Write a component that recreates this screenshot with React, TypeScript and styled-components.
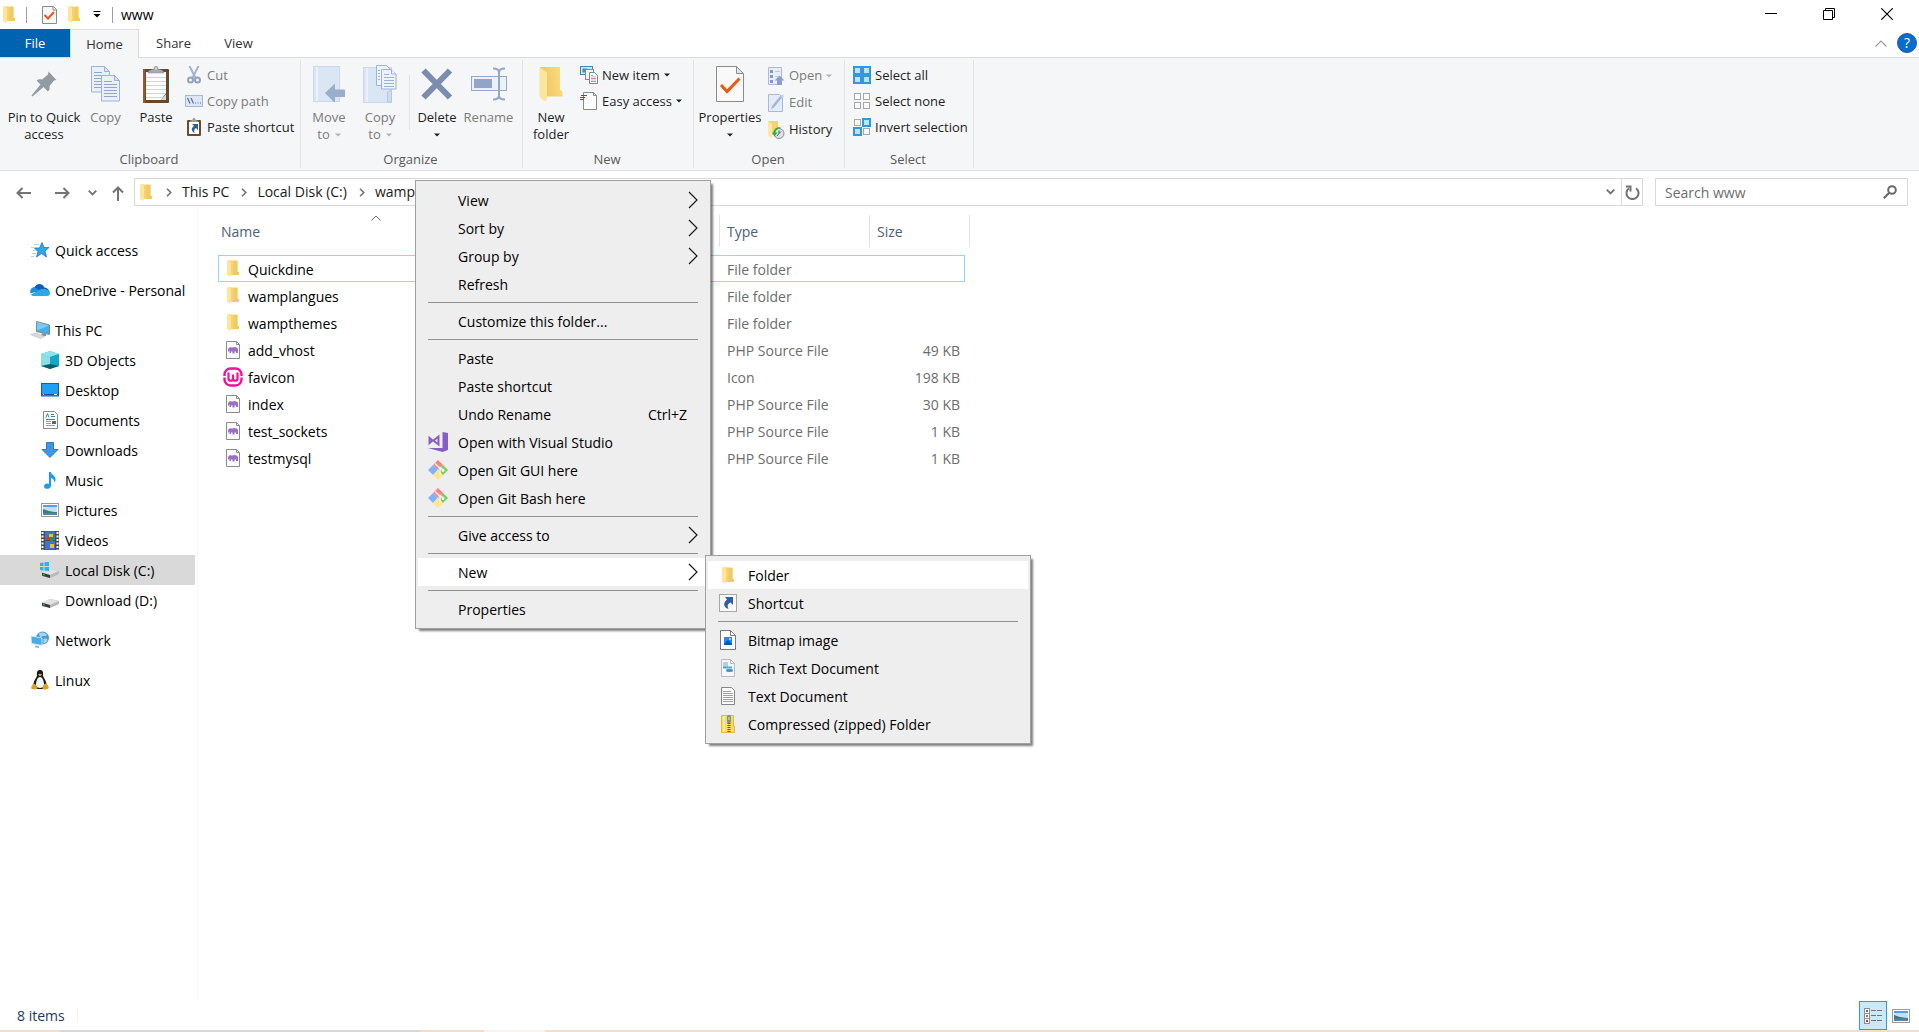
import React from "react";
import styled, { createGlobalStyle, css } from "styled-components";

const GlobalStyle = createGlobalStyle`
  * { box-sizing: border-box; }
  html, body { margin: 0; padding: 0; }
  body {
    font-family: "Open Sans", "Noto Sans", sans-serif;
    font-size: 14px;
    line-height: 20px;
    color: #000;
    background: #fff;
  }
  button, input {
    font: inherit;
    color: inherit;
    margin: 0;
    padding: 0;
    border: 0;
    background: none;
  }
  button { cursor: default; }
  ul { list-style: none; margin: 0; padding: 0; }
  svg { display: block; flex: none; }
`;

/* ---------- icons ---------- */

const FolderIcon = ({ w = 12, h = 17 }: { w?: number; h?: number }) => (
  <svg width={w} height={h} viewBox="0 0 12 17" preserveAspectRatio="none">
    <path d="M3 0.5h7.5v11.5l1.5 0v3H3z" fill="#f7d274" />
    <path d="M7 1h3.5v11H12v3H6z" fill="#ecc35c" opacity="0.6" />
    <path d="M0 0.3L4 2v12.5L3.6 17L0 15z" fill="#ffe59a" />
    <path d="M0 0.3h3L4 2z" fill="#fdd878" />
  </svg>
);

const BigFolderIcon = () => (
  <svg width="24" height="35" viewBox="0 0 24 35">
    <defs>
      <linearGradient id="bigFolder" x1="0" x2="1" y1="0.6" y2="0.4">
        <stop offset="0" stopColor="#eec35e" />
        <stop offset="1" stopColor="#f9dc80" />
      </linearGradient>
    </defs>
    <path d="M1 0h20v22.5l2.5 2V29.5H6z" fill="url(#bigFolder)" />
    <path d="M0.5 0.3l7.5 5v26.5l-1.5 3l-6-4.5z" fill="#ffe59b" />
  </svg>
);

const CheckPageIcon = () => (
  <svg width="15" height="18" viewBox="0 0 15 18">
    <path d="M0.5 0.5h11l3 3v14h-14z" fill="#f7f7f7" stroke="#8b8b8b" />
    <path d="M11 0.5v3.5h3.5" fill="none" stroke="#8b8b8b" />
    <path d="M2.5 9l3.5 3.5l6-6.5" fill="none" stroke="#e8591c" strokeWidth="2" />
  </svg>
);

const PropertiesIcon = () => (
  <svg width="28" height="36" viewBox="0 0 28 36">
    <path d="M0.5 0.5h20l7 7v28h-27z" fill="#f9f9f9" stroke="#8b8b8b" />
    <path d="M20.5 0.5v7h7z" fill="#e3e3e3" stroke="#8b8b8b" />
    <path d="M5 19l6 6.5l12.5-13" fill="none" stroke="#f0560f" strokeWidth="3" />
  </svg>
);

const PinIcon = () => (
  <svg width="26" height="26" viewBox="0 0 26 26">
    <path
      d="M17.5 0.5l8 8.5l-2.5 0.5l-4.5 5.5c0.5 2.5 0 4-1.5 5.5l-4.5-4.5l-11 9.5l-1-1l9-11l-4-4c2-1.5 3.5-1.5 5.5-1l6-5z"
      fill="#929ba3"
    />
  </svg>
);

const PageLines = ({ x, y }: { x: number; y: number }) => (
  <g transform={`translate(${x} ${y})`}>
    <path d="M0.5 0.5h13l5 5v20.5h-18z" fill="#e9f0fa" stroke="#9fb2d3" />
    <path d="M13.5 0.5v5h5z" fill="#d6e1f2" stroke="#9fb2d3" />
    <path d="M3 6.5h8M3 9.5h13M3 12.5h13M3 15.5h13M3 18.5h13M3 21.5h13" stroke="#8fa5cb" />
  </g>
);

const CopyIcon = () => (
  <svg width="30" height="36" viewBox="0 0 30 36">
    <PageLines x={0} y={0} />
    <PageLines x={10} y={9} />
  </svg>
);

const PasteIcon = () => (
  <svg width="26" height="37" viewBox="0 0 26 37">
    <rect x="0" y="3" width="26" height="34" rx="1" fill="#6b4728" />
    <path d="M0 3h2v34H0z" fill="#8a6038" />
    <path d="M3 6h20v21l-5 7H3z" fill="#fbfdff" />
    <path d="M18 34l5-6v6z" fill="#cfdbe6" />
    <path d="M3 11.5h20M3 15.5h20M3 19.5h20M3 23.5h20M3 27.5h19M3 31.5h16" stroke="#b9dcf2" />
    <path d="M5 7c0-3 4-3 6-4c0-4 4-4 4 0c2 1 6 1 6 4z" fill="#a6a9ad" stroke="#85888c" strokeWidth="0.5" />
    <circle cx="13" cy="2.5" r="1" fill="#e7e7e7" />
  </svg>
);

const CutIcon = () => (
  <svg width="18" height="18" viewBox="0 0 18 18">
    <path d="M4.5 0L10.5 12M13.5 0L7.5 12" stroke="#a3b4cd" strokeWidth="2" />
    <circle cx="5.5" cy="14" r="2.5" fill="none" stroke="#8fa2c0" strokeWidth="2" />
    <circle cx="12.5" cy="14" r="2.5" fill="none" stroke="#8fa2c0" strokeWidth="2" />
  </svg>
);

const CopyPathIcon = () => (
  <svg width="18" height="12" viewBox="0 0 18 12">
    <rect x="0.5" y="0.5" width="17" height="11" fill="#dce6f5" stroke="#a9b9d6" />
    <path d="M2.5 3l2.5 5.5M6 3l2.5 5.5" stroke="#5e6f93" strokeWidth="1.2" />
    <path d="M10 8h1M12.5 8h1M15 8h1" stroke="#5e6f93" strokeWidth="1.2" />
  </svg>
);

const PasteShortcutIcon = () => (
  <svg width="14" height="18" viewBox="0 0 14 18">
    <rect x="0" y="2" width="14" height="16" rx="1" fill="#6d4a2c" />
    <rect x="2" y="4" width="10" height="12" fill="#fff" />
    <path d="M3 4c0-2 2-1.5 2.5-2.5c0.5-2 2.5-2 3 0c0.5 1 2.5 0.5 2.5 2.5z" fill="#9b9ea1" />
    <path d="M5 6h6v6l-2-2c-2 1-2 2.5-1.5 5c-3.5-2-3.5-5-0.5-7z" fill="#2b5c9e" />
  </svg>
);

const MoveToIcon = () => (
  <svg width="32" height="36" viewBox="0 0 32 36">
    <rect x="0.5" y="0.5" width="26" height="35" fill="#dbe6f5" stroke="#cbd9ee" />
    <path d="M4 1v34" stroke="#eaf1fa" strokeWidth="2" />
    <path d="M12 27l10-9.5v6h10v7.5h-10v6z" fill="#9aadca" />
  </svg>
);

const CopyToIcon = () => (
  <svg width="34" height="38" viewBox="0 0 34 38">
    <rect x="0.5" y="2.5" width="28" height="35" fill="#dbe6f5" stroke="#cbd9ee" />
    <path d="M4 3v34" stroke="#eaf1fa" strokeWidth="2" />
    <path d="M24.5 37v-10l4-2v12z" fill="#cfdcf0" stroke="#b5c6e1" />
    <g stroke="#9fb2d3" fill="#edf3fb">
      <path d="M13.5 0.5h10l4 4v16h-14z" />
      <path d="M18.5 4.5h10l4.5 4.5v15h-14.5z" />
      <path d="M28.5 4.5v4.5h4.5" />
      <path d="M15 5.5h2M15 8.5h2M15 11.5h2M15 14.5h2M21 9.5h5M21 12.5h10M21 15.5h10M21 18.5h10M21 21.5h10" />
    </g>
  </svg>
);

const DeleteIcon = () => (
  <svg width="32" height="32" viewBox="0 0 32 32">
    <path d="M2.5 2.5L29 29.5M29 2.5L2.5 29.5" stroke="#7b8cae" strokeWidth="6" />
  </svg>
);

const RenameIcon = () => (
  <svg width="36" height="34" viewBox="0 0 36 34">
    <rect x="0.5" y="9.5" width="35" height="14" fill="#eaf1fb" stroke="#94a8cb" />
    <rect x="3" y="12" width="18" height="9" fill="#93a5c6" />
    <path d="M22 1.5c4 0 6 1.5 6 4c0-2.5 2-4 6-4M28 4v26M22 32.5c4 0 6-1.5 6-4c0 2.5 2 4 6 4" fill="none" stroke="#94a8c9" strokeWidth="2" />
  </svg>
);

const NewItemIcon = () => (
  <svg width="18" height="18" viewBox="0 0 18 18">
    <rect x="0.5" y="0.5" width="12" height="8" fill="#c9e9f7" stroke="#3d88b3" />
    <rect x="2.5" y="2.5" width="5" height="4" fill="#41919f" />
    <rect x="5.5" y="3.5" width="8" height="10" fill="#f5f5f5" stroke="#8a8a8a" />
    <path d="M9.5 6.5h5l3 3v8h-8z" fill="#fff" stroke="#858585" />
    <path d="M11 9.5h2M11 12.5h5M11 15.5h5" stroke="#d98b84" />
    <path d="M11 11h5M11 14h5" stroke="#a6c2e0" />
  </svg>
);

const EasyAccessIcon = () => (
  <svg width="18" height="18" viewBox="0 0 18 18">
    <path d="M3.5 0.5h10l3 3v14h-13z" fill="#fdfdfd" stroke="#8a8a8a" />
    <path d="M13.5 0.5v3h3" fill="none" stroke="#8a8a8a" />
    <path d="M1 3.5h6M0 5.5h5M0 7.5h4" stroke="#2563a0" strokeWidth="1.2" />
  </svg>
);

const OpenIcon = () => (
  <svg width="18" height="18" viewBox="0 0 18 18">
    <path d="M1.5 0.5h13v17h-13z" fill="#e7eefa" stroke="#a9bad7" />
    <path d="M3 3h3v3H3zM3 8h3v3H3zM3 13h3v3H3z" fill="#8498bd" />
    <path d="M8 4.5h5M8 9.5h3" stroke="#b9c7e0" />
    <path d="M12.5 8.5l5 5h-2.5v4.5h-5v-4.5H7.5z" fill="#8d9fc1" />
  </svg>
);

const EditIcon = () => (
  <svg width="18" height="18" viewBox="0 0 18 18">
    <path d="M1.5 0.5h11l3 3v14h-14z" fill="#e3ebf8" stroke="#a9bad7" />
    <path d="M4 15l1-3L13.5 1.5l2 1.5L7 13.5z" fill="#a5b5d2" />
    <path d="M13 2l3-1.5l1 1.5l-2 2z" fill="#c3d0e6" />
  </svg>
);

const HistoryIcon = () => (
  <svg width="18" height="18" viewBox="0 0 18 18">
    <path d="M1 0h10v14H4z" fill="#f5d275" />
    <path d="M1 0l4 3v14l-4-2z" fill="#ffe79f" />
    <circle cx="12" cy="12.5" r="5" fill="#dfe3e6" stroke="#858a8d" />
    <path d="M12 9.5v3l2-2M12 12.5l-2 2.5" stroke="#55595c" fill="none" />
    <path d="M14 6.5c-5-1-7 2-7.5 5l-1.5 0l2.5 4l3-4h-2c0-2 2-4 5.5-5z" fill="#23b14a" />
  </svg>
);

const SelectGrid = ({ on }: { on: [number, number, number, number] }) => (
  <svg width="18" height="18" viewBox="0 0 18 18">
    {on.map((active, i) => {
      const x = (i % 2) * 9;
      const y = Math.floor(i / 2) * 9;
      return active ? (
        <rect key={i} x={x + 1} y={y + 1} width="7" height="7" fill="#bfe2fb" stroke="#3397e0" strokeWidth="2" />
      ) : (
        <rect key={i} x={x + 1.5} y={y + 1.5} width="6" height="6" fill="#fbfbfb" stroke="#a8a8a8" />
      );
    })}
  </svg>
);

const Caret = ({ muted }: { muted?: boolean }) => (
  <svg width="6" height="4" viewBox="0 0 6 4">
    <path d="M0 0.5h6L3 3.5z" fill={muted ? "#b3b3b3" : "#1e1e1e"} />
  </svg>
);

const ArrowLeft = () => (
  <svg width="15" height="12" viewBox="0 0 15 12">
    <path d="M15 6H1.5M6.5 1L1.5 6l5 5" fill="none" stroke="#737373" strokeWidth="2" />
  </svg>
);
const ArrowRight = () => (
  <svg width="15" height="12" viewBox="0 0 15 12">
    <path d="M0 6h13.5M8.5 1l5 5l-5 5" fill="none" stroke="#737373" strokeWidth="2" />
  </svg>
);
const ArrowUp = () => (
  <svg width="12" height="15" viewBox="0 0 12 15">
    <path d="M6 15V1.5M1 6.5l5-5l5 5" fill="none" stroke="#737373" strokeWidth="2" />
  </svg>
);
const ChevronDown = ({ w = 9 }: { w?: number }) => (
  <svg width={w} height="6" viewBox="0 0 9 6">
    <path d="M0.7 0.7L4.5 4.5L8.3 0.7" fill="none" stroke="#737373" strokeWidth="1.8" />
  </svg>
);
const CrumbChevron = () => (
  <svg width="6" height="9" viewBox="0 0 6 9">
    <path d="M1 0.7L4.8 4.5L1 8.3" fill="none" stroke="#737373" strokeWidth="1.6" />
  </svg>
);
const RefreshIcon = () => (
  <svg width="15" height="15" viewBox="0 0 15 15">
    <path d="M11 3.2a6 6 0 1 1-7 0" fill="none" stroke="#737373" strokeWidth="2" />
    <path d="M1 1.5h4.500v5" fill="none" stroke="#737373" strokeWidth="2" />
  </svg>
);
const SearchIcon = () => (
  <svg width="14" height="14" viewBox="0 0 14 14">
    <circle cx="9" cy="5" r="3.8" fill="none" stroke="#6a6a6a" strokeWidth="2" />
    <path d="M6.2 7.8L0.8 13.2" stroke="#6a6a6a" strokeWidth="2.2" />
  </svg>
);
const MenuChevron = () => (
  <svg width="10" height="18" viewBox="0 0 10 18">
    <path d="M1 1l8 8l-8 8" fill="none" stroke="#1a1a1a" strokeWidth="1.2" />
  </svg>
);

const QuickStarIcon = () => (
  <svg width="20" height="18" viewBox="0 0 20 18">
    <path d="M12 1.5l2 5h5L15 10l1.5 6l-5-3.5L6.5 16l1.5-5.5L4.500 7h5z" fill="#30a4ec" stroke="#1978c4" strokeWidth="0.8" />
    <path d="M4 3.5h5M1 6.5h3M3 9.5h3M2 12.5h4M1 15.5h3" stroke="#a9d6f3" />
  </svg>
);
const OneDriveIcon = () => (
  <svg width="20" height="14" viewBox="0 0 20 14">
    <path d="M4 5.5C6 0 12-0.5 14.5 4.5c3 0.5 4.5 2 5 4.5H3z" fill="#0f5fb8" />
    <path d="M4.5 4c-3.5 0-5 3.5-4 6.5l9-3z" fill="#1a8ee0" />
    <path d="M1 11.5l9-5c6-1.5 10 1 10 3.5c0 2-1.5 3-3 3H4c-1.5 0-2.5-0.5-3-1.5z" fill="#2ba7ea" />
  </svg>
);
const ThisPcIcon = () => (
  <svg width="20" height="18" viewBox="0 0 20 18">
    <path d="M6.5 0.5l13 3.5v9.5l-13-3z" fill="#3fb0ee" stroke="#7d8891" />
    <path d="M7 1l12 3.5l-12 5z" fill="#7bcaf5" />
    <path d="M12 12l4 1v2h-5z" fill="#8b949b" />
    <path d="M0.5 13.5l6-1.5l8 3.5l-4 2z" fill="#d8dbdd" stroke="#b9bdc0" strokeWidth="0.6" />
  </svg>
);
const CubeIcon = () => (
  <svg width="18" height="18" viewBox="0 0 18 18">
    <path d="M9 0l9 3v12l-9 3l-9-3V3z" fill="#38bccb" />
    <path d="M0 3l9-3l9 3l-9 3z" fill="#8ee4ea" />
    <path d="M0 3l9 3v8l-9 1z" fill="#a0e6ea" opacity="0.8" />
    <path d="M9 6l9-3v12l-9-1z" fill="#16a6c8" />
    <path d="M0 15l9-2l9 2l-9 3z" fill="#07606f" />
  </svg>
);
const DesktopIcon = () => (
  <svg width="18" height="14" viewBox="0 0 18 14">
    <rect x="0.5" y="0.5" width="17" height="12.5" fill="#1fa0f5" stroke="#0c63ab" />
    <path d="M1 11.5h16" stroke="#0c5796" />
    <path d="M2 11.5h1M13 11.5h3" stroke="#fff" />
  </svg>
);
const DocumentsIcon = () => (
  <svg width="15" height="18" viewBox="0 0 15 18">
    <path d="M0.5 0.5h11l3 3v14h-14z" fill="#fff" stroke="#8b8b8b" />
    <path d="M3 6.5l1.5-4l1.5 4M8 3.5h3M8 5.5h4M3 8.5h9" stroke="#2a86cf" fill="none" />
    <path d="M3 10.5h5M3 12.5h5M3 14.5h9" stroke="#9b9b9b" />
    <rect x="9" y="10" width="4" height="3" fill="#3b6fa3" />
  </svg>
);
const DownloadsIcon = () => (
  <svg width="18" height="16" viewBox="0 0 18 16">
    <path d="M5.5 0.5h7v7h4.5l-8 8l-8-8h4.5z" fill="#3b97e3" stroke="#2a7ec9" />
  </svg>
);
const MusicIcon = () => (
  <svg width="12" height="17" viewBox="0 0 12 17">
    <path d="M5 0h2c0 3 5 3.5 4.5 8c0 1-0.5 2-1.5 3c1-3-1-4.5-3-5v7.5c0 4-7 4.5-7 1c0-2.500 3-3.5 5-2.5z" fill="#1d9bf0" />
  </svg>
);
const PictureIcon = () => (
  <svg width="18" height="14" viewBox="0 0 18 14">
    <rect x="0.5" y="0.5" width="17" height="13" fill="#fff" stroke="#9a9a9a" />
    <rect x="2" y="2" width="14" height="10" fill="#bfe0f7" />
    <path d="M2 2h14v2H2z" fill="#5b9be3" />
    <path d="M2 6c4 1 7 3 14 3v3H2z" fill="#3f7d7a" />
    <path d="M2 10h14v2H2z" fill="#4f86b0" />
  </svg>
);
const VideosIcon = () => (
  <svg width="18" height="19" viewBox="0 0 18 19">
    <rect width="18" height="19" fill="#4c4c4c" />
    <rect x="4" y="0.5" width="10" height="8.5" fill="#3f72d9" />
    <rect x="4" y="10" width="10" height="8.5" fill="#3f72d9" />
    <path d="M8 3h4v3H8zM9 13h4v4H9z" fill="#e7c22c" />
    <path d="M5 6h4v3H5z" fill="#c6402f" />
    <path d="M9 6h3v4H9z" fill="#3a8a45" />
    <path d="M1.5 1v18M16.5 1v18" stroke="#fff" strokeWidth="2" strokeDasharray="2 1.5" />
  </svg>
);
const DriveShape = () => (
  <g transform="translate(0 7)">
    <path d="M2 4l8-4l9 2v3l-9 4l-8-2z" fill="#b6b8b9" />
    <path d="M2 3.5l8-3.5l9 2l-9 4z" fill="#dfe1e2" />
    <path d="M2 3.8l8 2.2v3l-8-2.2z" fill="#3a3d3f" />
    <path d="M3 5.5l1.5 0.4" stroke="#4fce5d" strokeWidth="1.2" />
  </g>
);
const LocalDiskIcon = () => (
  <svg width="20" height="16" viewBox="0 0 20 16">
    <DriveShape />
    <path d="M0 1l3.5-0.5V4H0zM4.5 0.3L9 0v4H4.5zM0 5h3.5v3.5L0 8zM4.5 5H9v4.2l-4.5-0.6z" fill="#1fb8ef" />
  </svg>
);
const DriveIcon = () => (
  <svg width="20" height="16" viewBox="0 0 20 16">
    <DriveShape />
  </svg>
);
const NetworkIcon = () => (
  <svg width="20" height="18" viewBox="0 0 20 18">
    <circle cx="12.5" cy="7" r="6.5" fill="#4b9ccb" />
    <path d="M9 2.5c3-2 6.500-1 8 1.5c-2 2-3 0-5 1.5s-3-1-3-3zM13.5 8c2-1 4 0 4 1c-1 2-2 3-4 3.5z" fill="#a9d6ec" />
    <path d="M1 5l11 2v7.5L1.5 12.5z" fill="#44aeea" stroke="#e2eef5" strokeWidth="0.8" />
    <path d="M5 14.5l4 0.5v2l-4-0.8z" fill="#9ab0bd" />
  </svg>
);
const LinuxIcon = () => (
  <svg width="18" height="20" viewBox="0 0 18 20">
    <path d="M9 0c-3 0-3.5 2.5-3 5.5c0 2-4 5-3.5 10.5l3.5 3h6l3.5-3C16 10.5 12 7.5 12 5.5C12.5 2.5 12 0 9 0z" fill="#1b1b1b" />
    <path d="M9 7c-2.5 0-4.5 5-4 9c1 2.5 7 2.5 8 0c0.5-4-1.5-9-4-9z" fill="#f4f4f4" />
    <path d="M7 4.5l2-0.7l2 0.7l-2 1.8z" fill="#f0b429" />
    <path d="M3 13.5c1.5 0.5 3.5 3 3.5 4.5c-0.5 2-4.5 1.5-6.5 0.5c0.5-2 1-4 3-5zM15 13.5c-2 0-3.5 3-3.5 5c1 2 4.5 1 6.5-0.5c-1-1.5-1-3.5-3-4.5z" fill="#dba11c" />
  </svg>
);
const PhpIcon = () => (
  <svg width="14" height="18" viewBox="0 0 14 18">
    <path d="M0.5 0.5h10l3 3v14h-13z" fill="#fafafa" stroke="#8b8b8b" />
    <path d="M10.5 0.5v3h3" fill="none" stroke="#8b8b8b" />
    <path d="M2 8c1-2 3-2 4-1.3c2-1.2 5-0.5 6 1.3v4h-2v-1.500H8.5v2h-2V10.5H5V12H3.5V9.5L2 11z" fill="#9b6fc4" />
  </svg>
);
const WampIcon = () => (
  <svg width="20" height="20" viewBox="0 0 20 20">
    <rect x="1.5" y="1.5" width="17" height="17" rx="6" fill="none" stroke="#f5109a" strokeWidth="2.4" />
    <path d="M5.500 5.5v6c0 3 4.5 3 4.5 0v-4v4c0 3 4.500 3 4.5 0v-6" fill="none" stroke="#f5109a" strokeWidth="2.2" />
    <path d="M0 9h3v1.5H0zM17 9h3v1.5h-3z" fill="#fff" />
  </svg>
);
const VisualStudioIcon = () => (
  <svg width="20" height="20" viewBox="0 0 20 20">
    <path d="M14.5 0l5.5 1v17l-5.5 2l-14.5-4h14.5z" fill="#865fc5" />
    <path d="M1.5 6v5l3-2.5zM10.5 4.5v8L5.5 8.5z" fill="none" stroke="#865fc5" strokeWidth="2" />
  </svg>
);
const GitIcon = () => (
  <svg width="20" height="20" viewBox="0 0 20 20">
    <path d="M10 0l5 5l-4 4.5h-2L5 5z" fill="#fb8080" />
    <path d="M5 5l4.500 5l-4.500 5l-5-5z" fill="#80b3ff" />
    <path d="M10 10.5l5 4.5l-5 5l-5-5z" fill="#ffe680" />
    <path d="M15 5l5 5l-5 5l-4.5-5z" fill="#80cc5c" />
    <path d="M7 3.5l5 5v7M12 8l4 2" stroke="#eee" strokeWidth="1.5" fill="none" />
    <circle cx="12" cy="8" r="1.5" fill="#eee" />
    <circle cx="15" cy="10.5" r="1.5" fill="#eee" />
  </svg>
);
const ShortcutIcon = () => (
  <svg width="18" height="18" viewBox="0 0 18 18">
    <rect x="0.5" y="0.5" width="17" height="17" fill="#f9f9f9" stroke="#a7a7a7" />
    <path d="M6 3h8v8l-2.5-2.5c-3 1.5-3.5 3-2 6.5c-5.5-2-5.5-6-1.5-9.5z" fill="#2f5f9f" />
  </svg>
);
const BitmapIcon = () => (
  <svg width="16" height="20" viewBox="0 0 16 20">
    <path d="M0.5 0.5h10l5 5v14h-15z" fill="#fff" stroke="#7a7a7a" />
    <path d="M10.5 0.5v5h5" fill="none" stroke="#7a7a7a" />
    <rect x="4" y="7" width="8" height="8" fill="#1b8ff2" />
    <path d="M4 14l4-4l4 4v1H4z" fill="#0a54b3" />
    <circle cx="10" cy="9" r="1" fill="#cbe6ff" />
  </svg>
);
const RichTextIcon = () => (
  <svg width="14" height="18" viewBox="0 0 14 18">
    <path d="M0.5 0.5h9l4 4v13h-13z" fill="#f5f7f8" stroke="#b9bcbf" />
    <path d="M9.5 0.5v4h4" fill="none" stroke="#b9bcbf" />
    <path d="M2 3h5v5H2z" fill="#c8c2ee" />
    <path d="M2 8.5h9M5 11.5h7" stroke="#3fb5c9" strokeWidth="2" />
    <path d="M6 10h5v3H6z" fill="#4f79b8" opacity="0.7" />
  </svg>
);
const TextDocIcon = () => (
  <svg width="14" height="18" viewBox="0 0 14 18">
    <path d="M0.5 0.5h10l3 3v14h-13z" fill="#fafafa" stroke="#868686" />
    <path d="M2 4.5h8M2 6.5h10M2 8.5h10M2 10.5h10M2 12.5h10M2 14.5h10" stroke="#a3a3a3" />
  </svg>
);
const ZipIcon = () => (
  <svg width="14" height="18" viewBox="0 0 14 18">
    <path d="M0.5 0.5h12v10.5h1v6.5h-13z" fill="#fbd965" stroke="#e5b93c" />
    <path d="M3 1v16" stroke="#fdeaa4" strokeWidth="2" />
    <rect x="6" y="0" width="4" height="8" rx="1.5" fill="#8b8b8b" />
    <path d="M8 8v10" stroke="#5b5b5b" strokeWidth="3" strokeDasharray="1 1" />
    <path d="M8 2v3" stroke="#e6e6e6" />
  </svg>
);
const DetailsViewIcon = () => (
  <svg width="18" height="16" viewBox="0 0 18 16">
    <g fill="#fff" stroke="#8f8f8f">
      <rect x="0.5" y="0.5" width="5" height="5" />
      <rect x="0.5" y="5.5" width="5" height="5" />
      <rect x="0.5" y="10.5" width="5" height="5" />
    </g>
    <path d="M2 3h2" stroke="#3673b5" strokeWidth="2" />
    <path d="M2 8h2" stroke="#86822f" strokeWidth="2" />
    <path d="M2 13h2" stroke="#c03b2b" strokeWidth="2" />
    <path d="M7 2.5h5M13 2.5h5M7 7.5h5M13 7.5h5M7 12.5h5M13 12.5h5" stroke="#737373" />
  </svg>
);

/* ---------- window chrome ---------- */

const Window = styled.div`
  position: relative;
  display: flex;
  flex-direction: column;
  min-height: 100vh;
  background: #fff;
`;

const TitleBar = styled.header`
  display: flex;
  align-items: flex-start;
  justify-content: space-between;
  height: 29px;
`;

const QuickAccessBar = styled.div`
  display: flex;
  align-items: center;
  height: 29px;
  padding-left: 3px;
  gap: 11px;
`;

const TitleDivider = styled.span`
  width: 1px;
  height: 16px;
  background: #a0a0a0;
`;

const BarButton = styled.button<{ $space?: number }>`
  display: grid;
  place-items: center;
  margin-left: ${(p) => p.$space ?? 0}px;
`;

const WindowTitle = styled.h1`
  margin: 0 0 0 -3px;
  font-size: 14px;
  font-weight: 400;
  line-height: 20px;
`;

const WindowControls = styled.div`
  display: flex;
  padding-right: 3px;
`;

const WindowButton = styled.button`
  display: grid;
  place-items: center;
  width: 58px;
  height: 28px;
`;

const TabRow = styled.div`
  display: flex;
  align-items: flex-end;
  justify-content: space-between;
  height: 29px;
  border-bottom: 1px solid #dadbdc;
`;

const Tabs = styled.nav`
  display: flex;
`;

const Tab = styled.button<{ $w: number; $kind?: "file" | "active" }>`
  width: ${(p) => p.$w}px;
  height: 28px;
  font-size: 13px;
  color: #333;
  ${(p) => p.$kind === "file" && css`color: #fff; background: #0063b1;`}
  ${(p) =>
    p.$kind === "active" &&
    css`
      height: 29px;
      margin-bottom: -1px;
      padding-bottom: 1px;
      background: #f5f6f7;
      border: 1px solid #dadbdc;
      border-bottom: 0;
    `}
`;

const TabTools = styled.div`
  display: flex;
  align-items: center;
  gap: 10px;
  height: 28px;
  padding-right: 2px;
`;

const HelpButton = styled.button`
  width: 20px;
  height: 20px;
  border: 1px solid #1a5c9c;
  border-radius: 50%;
  background: #0a6cce;
  color: #fff;
  font-size: 14px;
  line-height: 18px;
`;

/* ---------- ribbon ---------- */

const RibbonBar = styled.section`
  display: flex;
  height: 113px;
  padding-top: 2px;
  background: #f5f6f7;
  border-bottom: 1px solid #dadbdc;
  font-size: 13px;
  line-height: 17px;
`;

const Group = styled.div<{ $w: number }>`
  display: flex;
  flex-direction: column;
  justify-content: space-between;
  width: ${(p) => p.$w}px;
  height: 108px;
  border-right: 1px solid #e2e3e4;
`;

const GroupBody = styled.div`
  display: flex;
  padding: 5px 4px 0;
`;

const GroupLabel = styled.div`
  padding-right: 2px;
  text-align: center;
  color: #5a5a5a;
`;

const LargeButton = styled.button<{ $w: number; $muted?: boolean }>`
  display: flex;
  flex-direction: column;
  align-items: center;
  width: ${(p) => p.$w}px;
  height: 79px;
  color: ${(p) => (p.$muted ? "#7b7b7b" : "#1e1e1e")};
`;

const LargeIcon = styled.span`
  display: grid;
  place-items: center;
  height: 38px;
  margin-bottom: 6px;
`;

const LargeLine = styled.span`
  display: flex;
  align-items: center;
  justify-content: center;
  gap: 5px;
  height: 17px;
  white-space: nowrap;
`;

const SmallColumn = styled.div<{ $pitch?: number; $inset?: number }>`
  display: grid;
  grid-auto-rows: ${(p) => p.$pitch ?? 26}px;
  align-content: start;
  justify-items: start;
  margin: -3px 0 0 ${(p) => p.$inset ?? 0}px;
`;

const SmallButton = styled.button<{ $muted?: boolean }>`
  display: flex;
  align-items: center;
  gap: 4px;
  white-space: nowrap;
  color: ${(p) => (p.$muted ? "#7b7b7b" : "#1e1e1e")};
`;

const SmallIcon = styled.span`
  display: grid;
  place-items: center;
  width: 18px;
  height: 18px;
`;

const InnerDivider = styled.span`
  width: 1px;
  height: 55px;
  margin: 10px 3px 0 2px;
  background: #e2e3e4;
`;

type LargeProps = { w: number; icon: React.ReactNode; lines: string[]; muted?: boolean; menu?: boolean };

const Large = ({ w, icon, lines, muted, menu }: LargeProps) => (
  <LargeButton $w={w} $muted={muted} disabled={muted}>
    <LargeIcon>{icon}</LargeIcon>
    {lines.map((line, i) => (
      <LargeLine key={line}>
        {line}
        {menu && i > 0 && <Caret muted={muted} />}
      </LargeLine>
    ))}
    {menu && lines.length === 1 && (
      <LargeLine>
        <Caret muted={muted} />
      </LargeLine>
    )}
  </LargeButton>
);

type SmallProps = { icon: React.ReactNode; label: string; muted?: boolean; menu?: boolean };

const Small = ({ icon, label, muted, menu }: SmallProps) => (
  <SmallButton $muted={muted} disabled={muted}>
    <SmallIcon>{icon}</SmallIcon>
    {label}
    {menu && <Caret muted={muted} />}
  </SmallButton>
);

const Ribbon = () => (
  <RibbonBar aria-label="Home">
    <Group $w={301}>
      <GroupBody>
        <Large w={80} icon={<PinIcon />} lines={["Pin to Quick", "access"]} />
        <Large w={43} icon={<CopyIcon />} lines={["Copy"]} muted />
        <Large w={58} icon={<PasteIcon />} lines={["Paste"]} />
        <SmallColumn>
          <Small icon={<CutIcon />} label="Cut" muted />
          <Small icon={<CopyPathIcon />} label="Copy path" muted />
          <Small icon={<PasteShortcutIcon />} label="Paste shortcut" />
        </SmallColumn>
      </GroupBody>
      <GroupLabel>Clipboard</GroupLabel>
    </Group>
    <Group $w={222}>
      <GroupBody>
        <Large w={48} icon={<MoveToIcon />} lines={["Move", "to"]} muted menu />
        <Large w={54} icon={<CopyToIcon />} lines={["Copy", "to"]} muted menu />
        <InnerDivider />
        <Large w={48} icon={<DeleteIcon />} lines={["Delete"]} menu />
        <Large w={55} icon={<RenameIcon />} lines={["Rename"]} muted />
      </GroupBody>
      <GroupLabel>Organize</GroupLabel>
    </Group>
    <Group $w={171}>
      <GroupBody>
        <Large w={48} icon={<BigFolderIcon />} lines={["New", "folder"]} />
        <SmallColumn $inset={5}>
          <Small icon={<NewItemIcon />} label="New item" menu />
          <Small icon={<EasyAccessIcon />} label="Easy access" menu />
        </SmallColumn>
      </GroupBody>
      <GroupLabel>New</GroupLabel>
    </Group>
    <Group $w={151}>
      <GroupBody>
        <Large w={64} icon={<PropertiesIcon />} lines={["Properties"]} menu />
        <SmallColumn $pitch={27} $inset={5}>
          <Small icon={<OpenIcon />} label="Open" muted menu />
          <Small icon={<EditIcon />} label="Edit" muted />
          <Small icon={<HistoryIcon />} label="History" />
        </SmallColumn>
      </GroupBody>
      <GroupLabel>Open</GroupLabel>
    </Group>
    <Group $w={129}>
      <GroupBody>
        <SmallColumn $inset={4}>
          <Small icon={<SelectGrid on={[1, 1, 1, 1]} />} label="Select all" />
          <Small icon={<SelectGrid on={[0, 0, 0, 0]} />} label="Select none" />
          <Small icon={<SelectGrid on={[0, 1, 1, 0]} />} label="Invert selection" />
        </SmallColumn>
      </GroupBody>
      <GroupLabel>Select</GroupLabel>
    </Group>
  </RibbonBar>
);

/* ---------- address row ---------- */

const AddressRow = styled.div`
  display: flex;
  padding: 7px 11px 0 4px;
`;

const NavButton = styled.button<{ $w: number }>`
  display: grid;
  place-items: center;
  width: ${(p) => p.$w}px;
  height: 28px;
  padding-top: 2px;
`;

const AddressBox = styled.div`
  display: flex;
  flex: 1;
  align-items: center;
  min-width: 0;
  height: 28px;
  margin: 0 12px 0 2px;
  padding-left: 5px;
  border: 1px solid #d9d9d9;
`;

const Crumbs = styled.ol`
  display: flex;
  flex: 1;
  align-items: center;
  gap: 12px;
  margin: 0;
  padding: 0 0 0 14px;
  list-style: none;
`;

const Crumb = styled.li`
  display: flex;
  align-items: center;
  gap: 10px;
`;

const CrumbLink = styled.a`
  color: #1a1a1a;
  text-decoration: none;
`;

const BoxButton = styled.button<{ $divided?: boolean }>`
  display: grid;
  place-items: center;
  width: 21px;
  height: 26px;
  border-left: ${(p) => (p.$divided ? "1px solid #d9d9d9" : "0")};
`;

const SearchBox = styled.label`
  display: flex;
  align-items: center;
  width: 253px;
  height: 28px;
  padding: 0 10px 0 9px;
  border: 1px solid #d9d9d9;
`;

const SearchInput = styled.input`
  flex: 1;
  min-width: 0;
  padding-top: 2px;
  outline: 0;
  &::placeholder { color: #6d6d6d; opacity: 1; }
`;

/* ---------- body ---------- */

const Body = styled.div`
  display: flex;
  flex: 1;
`;

const Label = styled.span`
  padding-top: 2px;
`;

const SidePane = styled.nav`
  width: 198px;
  padding-top: 29px;
  border-right: 1px solid #f8f8f8;
`;

const SideGroup = styled.ul`
  width: 195px;
  margin-bottom: 10px;
`;

const SideItem = styled.button<{ $child?: boolean; $current?: boolean }>`
  display: flex;
  align-items: center;
  gap: 5px;
  width: 100%;
  height: 30px;
  padding-left: ${(p) => (p.$child ? 40 : 30)}px;
  background: ${(p) => (p.$current ? "#d9d9d9" : "transparent")};
  white-space: nowrap;
`;

const IconSlot = styled.span`
  display: grid;
  place-items: center;
  flex: none;
  width: 20px;
  height: 20px;
`;

type SideEntry = { label: string; icon: React.ReactNode; child?: boolean; current?: boolean };

const sideGroups: SideEntry[][] = [
  [{ label: "Quick access", icon: <QuickStarIcon /> }],
  [{ label: "OneDrive - Personal", icon: <OneDriveIcon /> }],
  [
    { label: "This PC", icon: <ThisPcIcon /> },
    { label: "3D Objects", icon: <CubeIcon />, child: true },
    { label: "Desktop", icon: <DesktopIcon />, child: true },
    { label: "Documents", icon: <DocumentsIcon />, child: true },
    { label: "Downloads", icon: <DownloadsIcon />, child: true },
    { label: "Music", icon: <MusicIcon />, child: true },
    { label: "Pictures", icon: <PictureIcon />, child: true },
    { label: "Videos", icon: <VideosIcon />, child: true },
    { label: "Local Disk (C:)", icon: <LocalDiskIcon />, child: true, current: true },
    { label: "Download (D:)", icon: <DriveIcon />, child: true },
  ],
  [{ label: "Network", icon: <NetworkIcon /> }],
  [{ label: "Linux", icon: <LinuxIcon /> }],
];

const FilePane = styled.main`
  flex: 1;
  padding: 9px 0 0 20px;
`;

const FileTable = styled.table`
  width: 747px;
  table-layout: fixed;
  border-collapse: separate;
  border-spacing: 0;
`;

const HeadCell = styled.th<{ $w: number; $divided?: boolean; $last?: boolean }>`
  position: relative;
  width: ${(p) => p.$w}px;
  height: 32px;
  padding: 2px 0 0 ${(p) => (p.$divided ? 7 : 3)}px;
  border-left: ${(p) => (p.$divided ? "1px solid #e2e2e2" : "0")};
  font-weight: 400;
  text-align: left;
  color: #4c607a;
  ${(p) =>
    p.$last &&
    css`
      &::after {
        content: "";
        position: absolute;
        top: 0;
        right: -5px;
        width: 1px;
        height: 32px;
        background: #e2e2e2;
      }
    `}
`;

const SortMark = styled.span`
  position: absolute;
  top: 0;
  left: 153px;
`;

const Spacer = styled.tr`
  height: 8px;
`;

const FileRow = styled.tr<{ $focused?: boolean }>`
  height: 27px;
  outline: ${(p) => (p.$focused ? "1px solid #99d1ff" : "0")};
  outline-offset: -1px;
`;

const Cell = styled.td<{ $right?: boolean }>`
  padding: 2px ${(p) => (p.$right ? 5 : 0)}px 0 ${(p) => (p.$right ? 0 : 8)}px;
  text-align: ${(p) => (p.$right ? "right" : "left")};
  color: #6d6d6d;
`;

const NameCell = styled.td`
  padding: 0 0 0 5px;
`;

const FileName = styled.span`
  display: flex;
  align-items: center;
  gap: 5px;
`;

const files = [
  { name: "Quickdine", icon: <FolderIcon />, type: "File folder", size: "" },
  { name: "wamplangues", icon: <FolderIcon />, type: "File folder", size: "" },
  { name: "wampthemes", icon: <FolderIcon />, type: "File folder", size: "" },
  { name: "add_vhost", icon: <PhpIcon />, type: "PHP Source File", size: "49 KB" },
  { name: "favicon", icon: <WampIcon />, type: "Icon", size: "198 KB" },
  { name: "index", icon: <PhpIcon />, type: "PHP Source File", size: "30 KB" },
  { name: "test_sockets", icon: <PhpIcon />, type: "PHP Source File", size: "1 KB" },
  { name: "testmysql", icon: <PhpIcon />, type: "PHP Source File", size: "1 KB" },
];

/* ---------- status bar and desktop edge ---------- */

const StatusBar = styled.footer`
  display: flex;
  align-items: center;
  justify-content: space-between;
  height: 29px;
  padding: 0 4px 0 17px;
  color: #1e395b;
`;

const ItemCount = styled.span`
  padding-right: 12px;
  border-right: 1px solid #f0f0f0;
  line-height: 14px;
`;

const ViewSwitch = styled.div`
  display: flex;
`;

const ViewButton = styled.button<{ $on?: boolean }>`
  display: grid;
  place-items: center;
  width: 28px;
  height: 29px;
  border: ${(p) => (p.$on ? "1px solid #26a0da" : "0")};
  background: ${(p) => (p.$on ? "#cbe8f6" : "transparent")};
`;

const DesktopEdge = styled.div`
  display: flex;
  height: 2px;
  background: #f1dfcd;
`;

const EdgePart = styled.span<{ $w: number; $fill?: string }>`
  width: ${(p) => p.$w}px;
  background: ${(p) => p.$fill ?? "transparent"};
`;

/* ---------- menus ---------- */

const MenuPanel = styled.ul<{ $x: number; $y: number; $w: number }>`
  position: absolute;
  top: ${(p) => p.$y}px;
  left: ${(p) => p.$x}px;
  width: ${(p) => p.$w}px;
  padding: 5px 2px;
  border: 1px solid #a0a0a0;
  background: #eee;
  box-shadow: 3px 3px 2px -1px rgba(0, 0, 0, 0.5);
`;

const MenuItem = styled.button<{ $hot?: boolean }>`
  display: grid;
  grid-template-columns: 20px 1fr auto 10px;
  column-gap: 10px;
  align-items: center;
  width: 100%;
  height: 28px;
  padding: 0 10px;
  background: ${(p) => (p.$hot ? "#fff" : "transparent")};
  text-align: left;
  white-space: nowrap;
`;

const MenuKey = styled(Label)`
  margin-right: -9px;
`;

const MenuRule = styled.li`
  height: 1px;
  margin: 4px 10px;
  background: #919191;
`;

type MenuEntry = null | { label: string; icon?: React.ReactNode; keys?: string; sub?: boolean; hot?: boolean };

const Menu = ({ x, y, w, entries, label }: { x: number; y: number; w: number; entries: MenuEntry[]; label: string }) => (
  <MenuPanel $x={x} $y={y} $w={w} role="menu" aria-label={label}>
    {entries.map((e, i) =>
      e === null ? (
        <MenuRule key={i} role="separator" />
      ) : (
        <li key={i} role="none">
          <MenuItem role="menuitem" $hot={e.hot}>
            <IconSlot>{e.icon}</IconSlot>
            <Label>{e.label}</Label>
            <MenuKey>{e.keys}</MenuKey>
            {e.sub && <MenuChevron />}
          </MenuItem>
        </li>
      )
    )}
  </MenuPanel>
);

const contextEntries: MenuEntry[] = [
  { label: "View", sub: true },
  { label: "Sort by", sub: true },
  { label: "Group by", sub: true },
  { label: "Refresh" },
  null,
  { label: "Customize this folder..." },
  null,
  { label: "Paste" },
  { label: "Paste shortcut" },
  { label: "Undo Rename", keys: "Ctrl+Z" },
  { label: "Open with Visual Studio", icon: <VisualStudioIcon /> },
  { label: "Open Git GUI here", icon: <GitIcon /> },
  { label: "Open Git Bash here", icon: <GitIcon /> },
  null,
  { label: "Give access to", sub: true },
  null,
  { label: "New", sub: true, hot: true },
  null,
  { label: "Properties" },
];

const newEntries: MenuEntry[] = [
  { label: "Folder", icon: <FolderIcon />, hot: true },
  { label: "Shortcut", icon: <ShortcutIcon /> },
  null,
  { label: "Bitmap image", icon: <BitmapIcon /> },
  { label: "Rich Text Document", icon: <RichTextIcon /> },
  { label: "Text Document", icon: <TextDocIcon /> },
  { label: "Compressed (zipped) Folder", icon: <ZipIcon /> },
];

export default function App() {
  return (
    <Window>
      <GlobalStyle />
      <TitleBar>
        <QuickAccessBar>
          <FolderIcon />
          <TitleDivider />
          <BarButton $space={4} aria-label="Properties"><CheckPageIcon /></BarButton>
          <BarButton aria-label="New folder"><FolderIcon /></BarButton>
          <BarButton $space={2} aria-label="Customize toolbar">
            <svg width="8" height="7" viewBox="0 0 8 7">
              <path d="M0.5 0.5h7" stroke="#000" />
              <path d="M0.5 3h7L4 6.5z" fill="#000" />
            </svg>
          </BarButton>
          <TitleDivider />
          <WindowTitle>www</WindowTitle>
        </QuickAccessBar>
        <WindowControls>
          <WindowButton aria-label="Minimize">
            <svg width="12" height="12" viewBox="0 0 12 12"><path d="M0 5.5h12" stroke="#000" /></svg>
          </WindowButton>
          <WindowButton aria-label="Restore">
            <svg width="12" height="12" viewBox="0 0 12 12">
              <path d="M0.5 2.5h9v9h-9zM2.5 2.5v-2h9v9h-2" fill="none" stroke="#000" />
            </svg>
          </WindowButton>
          <WindowButton aria-label="Close">
            <svg width="12" height="12" viewBox="0 0 12 12">
              <path d="M0.3 0.3l11.4 11.4M11.7 0.3L0.3 11.7" stroke="#000" strokeWidth="1.2" />
            </svg>
          </WindowButton>
        </WindowControls>
      </TitleBar>
      <TabRow>
        <Tabs>
          <Tab $w={70} $kind="file">File</Tab>
          <Tab $w={69} $kind="active">Home</Tab>
          <Tab $w={69}>Share</Tab>
          <Tab $w={61}>View</Tab>
        </Tabs>
        <TabTools>
          <BarButton aria-label="Collapse ribbon">
            <svg width="12" height="7" viewBox="0 0 12 7">
              <path d="M0.5 6.5L6 1l5.5 5.5" fill="none" stroke="#9d9d9d" strokeWidth="1.2" />
            </svg>
          </BarButton>
          <HelpButton aria-label="Help">?</HelpButton>
        </TabTools>
      </TabRow>
      <Ribbon />
      <AddressRow>
        <NavButton $w={39} aria-label="Back"><ArrowLeft /></NavButton>
        <NavButton $w={39} aria-label="Forward"><ArrowRight /></NavButton>
        <NavButton $w={21} aria-label="Recent locations"><ChevronDown /></NavButton>
        <NavButton $w={29} aria-label="Up"><ArrowUp /></NavButton>
        <AddressBox>
          <FolderIcon />
          <Crumbs>
            {["This PC", "Local Disk (C:)", "wamp"].map((c) => (
              <Crumb key={c}>
                <CrumbChevron />
                <CrumbLink href="#">{c}</CrumbLink>
              </Crumb>
            ))}
          </Crumbs>
          <BoxButton aria-label="Previous locations"><ChevronDown w={11} /></BoxButton>
          <BoxButton $divided aria-label="Refresh"><RefreshIcon /></BoxButton>
        </AddressBox>
        <SearchBox>
          <SearchInput aria-label="Search www" placeholder="Search www" />
          <SearchIcon />
        </SearchBox>
      </AddressRow>
      <Body>
        <SidePane aria-label="Folders">
          {sideGroups.map((group) => (
            <SideGroup key={group[0].label}>
              {group.map((e) => (
                <li key={e.label}>
                  <SideItem $child={e.child} $current={e.current}>
                    <IconSlot>{e.icon}</IconSlot>
                    <Label>{e.label}</Label>
                  </SideItem>
                </li>
              ))}
            </SideGroup>
          ))}
        </SidePane>
        <FilePane>
          <FileTable>
            <thead>
              <tr>
                <HeadCell $w={321}>
                  Name
                  <SortMark>
                    <svg width="10" height="6" viewBox="0 0 10 6">
                      <path d="M0.5 5.5L5 1l4.5 4.5" fill="none" stroke="#6d6d6d" />
                    </svg>
                  </SortMark>
                </HeadCell>
                <HeadCell $w={180} $divided />
                <HeadCell $w={150} $divided>Type</HeadCell>
                <HeadCell $w={96} $divided $last>Size</HeadCell>
              </tr>
            </thead>
            <tbody>
              <Spacer aria-hidden="true" />
              {files.map((f, i) => (
                <FileRow key={f.name} $focused={i === 0}>
                  <NameCell>
                    <FileName>
                      <IconSlot>{f.icon}</IconSlot>
                      <Label>{f.name}</Label>
                    </FileName>
                  </NameCell>
                  <Cell />
                  <Cell>{f.type}</Cell>
                  <Cell $right>{f.size}</Cell>
                </FileRow>
              ))}
            </tbody>
          </FileTable>
        </FilePane>
      </Body>
      <StatusBar>
        <ItemCount>8 items</ItemCount>
        <ViewSwitch>
          <ViewButton $on aria-label="Details view"><DetailsViewIcon /></ViewButton>
          <ViewButton aria-label="Thumbnail view"><PictureIcon /></ViewButton>
        </ViewSwitch>
      </StatusBar>
      <DesktopEdge>
        <EdgePart $w={60} />
        <EdgePart $w={360} $fill="#d8d8d8" />
        <EdgePart $w={64} />
        <EdgePart $w={61} $fill="#fbf4ee" />
      </DesktopEdge>
      <Menu x={415} y={180} w={296} entries={contextEntries} label="Folder menu" />
      <Menu x={705} y={555} w={326} entries={newEntries} label="New" />
    </Window>
  );
}
